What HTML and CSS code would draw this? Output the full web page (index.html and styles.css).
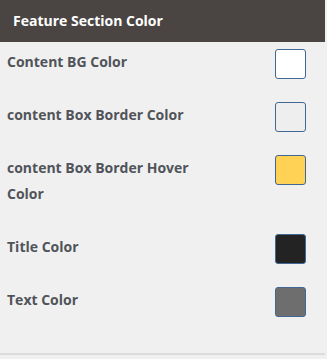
FILE: index.html
```html
<!DOCTYPE html>
<html lang="en">
<head>
<meta charset="UTF-8" />
<meta name="viewport" content="width=device-width, initial-scale=1" />
<title>Feature Section Color</title>
<link rel="stylesheet" href="styles.css">
</head>
<body>
<div class="panel">
  <h2 class="panel-title">Feature Section Color</h2>

  <div class="row">
    <span class="label">Content BG Color</span>
    <span class="swatch" style="background:#ffffff"></span>
  </div>
  <div class="row">
    <span class="label">content Box Border Color</span>
    <span class="swatch" style="background:#eeeeee"></span>
  </div>
  <div class="row">
    <span class="label">content Box Border Hover Color</span>
    <span class="swatch" style="background:#ffd255"></span>
  </div>
  <div class="row">
    <span class="label">Title Color</span>
    <span class="swatch" style="background:#232323"></span>
  </div>
  <div class="row">
    <span class="label">Text Color</span>
    <span class="swatch" style="background:#6e6e6e"></span>
  </div>

  <div class="panel-foot"></div>
</div>
</body>
</html>
```

FILE: styles.css
```css
body {
  margin: 0; background: #f0f0f0;
  font-family: "Open Sans", "DejaVu Sans", sans-serif;
}
.panel {
  width: 325px; min-height: 359px; background: #f0f0f0;
}
.panel-title {
  margin: 0; height: 42px; line-height: 42px; padding-left: 13px;
  background: #4a4543; color: #fff; font-size: 14px; font-weight: 700;
}
.row {
  display: flex; justify-content: space-between; align-items: flex-start;
  padding: 7px 19px 13px 7px;
}
.label {
  width: 205px; padding: 0 0 7px; line-height: 26px;
  font-size: 14px; font-weight: 700; color: #50545a;
}
.swatch {
  width: 29px; height: 28px; border: 1px solid #3f6892; border-radius: 3px;
  flex: none;
}
.panel-foot {
  margin-top: 20px; border-bottom: 2px solid #dcdcdc;
}
```
